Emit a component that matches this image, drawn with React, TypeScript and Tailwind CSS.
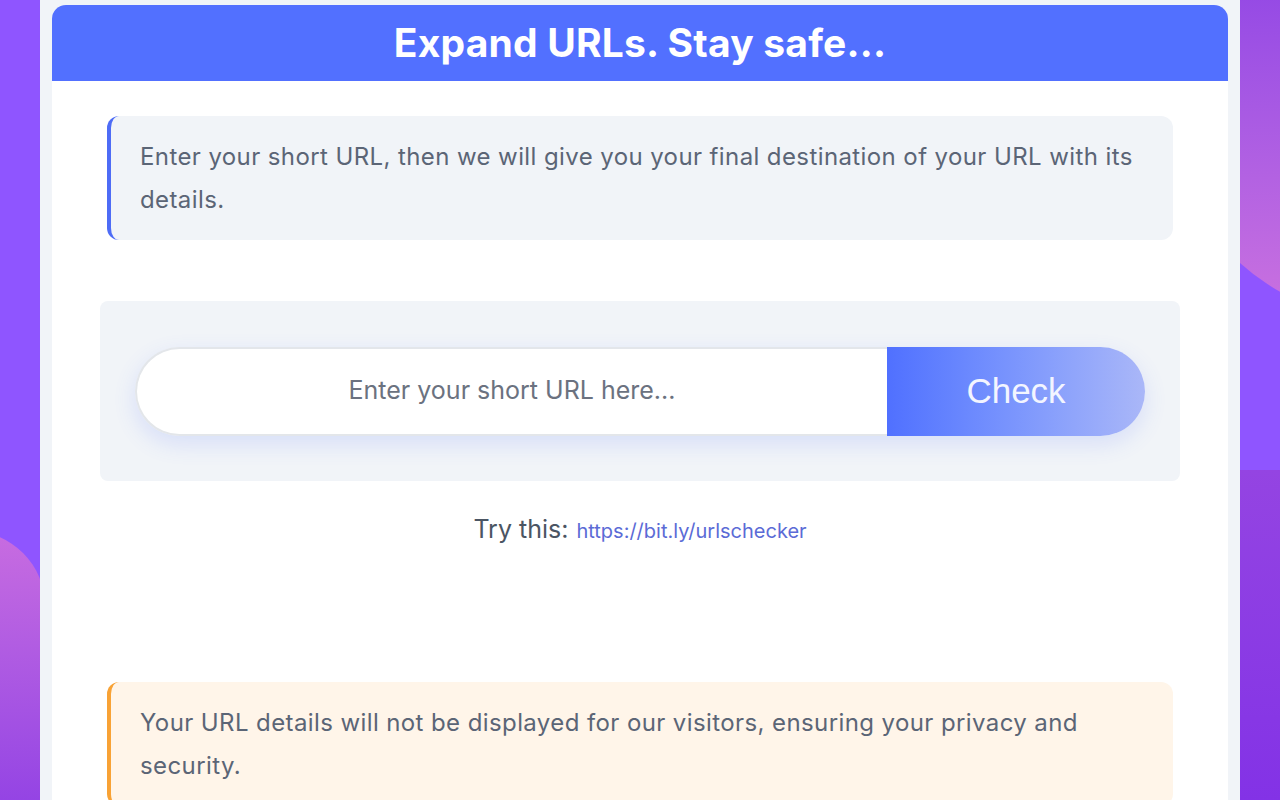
import React from "react";

export default function App() {
  return (
    <div className="relative h-[800px] w-[1280px] overflow-hidden bg-[#8f55ff]" style={{ fontFamily: "Inter, 'Noto Sans', sans-serif" }}>
      {/* decorative blobs on the sides */}
      <div className="absolute right-0 top-0 h-[330px] w-[40px] overflow-hidden">
        <div className="absolute left-[160px] -top-[156px] h-[480px] w-[480px] -translate-x-1/2 rounded-full bg-gradient-to-b from-[#7f2fe6] to-[#cc72df]" />
      </div>
      <div className="absolute bottom-0 right-0 h-[330px] w-[40px] bg-gradient-to-b from-[#9444e2] to-[#8332e6]" />
      <div className="absolute -left-[110px] top-[531px] h-[300px] w-[155px] rounded-t-[75px] bg-gradient-to-b from-[#c86ce0] to-[#8f3ee4]" />

      <div className="relative mx-[40px] h-full bg-[#f1f4f8] px-[12px] pt-[5px]">
        <div className="h-full overflow-hidden rounded-t-[14px] bg-white">
          <div className="flex h-[76px] items-center justify-center bg-[#5270ff]">
            <h1 className="text-[39px] font-bold tracking-[0.2px] text-white">Expand URLs. Stay safe...</h1>
          </div>

          <div className="px-[55px] pt-[35px]">
            <div className="rounded-[12px] border-l-[4px] border-[#4e6cf6] bg-[#f1f4f8] py-[19px] pl-[29px] pr-[30px] text-[24px] leading-[43px] tracking-[0.4px] text-[#5b6576]">
              Enter your short URL, then we will give you your final destination of your URL with its details.
            </div>
          </div>

          <div className="mt-[61px] px-[48px]">
            <div className="flex h-[180px] items-center rounded-[8px] bg-[#f1f4f8] px-[35px]">
              <div className="flex h-[89px] w-full items-stretch rounded-full shadow-[0_8px_22px_rgba(82,112,255,0.16)]">
                <div className="flex flex-1 items-center justify-center rounded-l-full border-2 border-r-0 border-[#e3e6ea] bg-white text-[25px] text-[#6b7280]">
                  Enter your short URL here...
                </div>
                <button className="flex w-[258px] items-center justify-center rounded-r-full bg-gradient-to-r from-[#5070ff] to-[#aab7f8] text-[35px] text-[#f3f5ff]" style={{ fontFamily: "'Liberation Sans', Arial, sans-serif" }}>
                  Check
                </button>
              </div>
            </div>
          </div>

          <div className="mt-[30px] flex items-baseline justify-center gap-[8px]">
            <span className="text-[25px] text-[#4b5563]">Try this:</span>
            <span className="text-[20px] text-[#5b6bd6]">https://bit.ly/urlschecker</span>
          </div>

          <div className="mt-[133px] px-[55px]">
            <div className="rounded-[12px] border-l-[4px] border-[#f8a235] bg-[#fff5e9] py-[19px] pl-[29px] pr-[30px] text-[24px] leading-[43px] tracking-[0.4px] text-[#5b6576]">
              Your URL details will not be displayed for our visitors, ensuring your privacy and security.
            </div>
          </div>
        </div>
      </div>
    </div>
  );
}
